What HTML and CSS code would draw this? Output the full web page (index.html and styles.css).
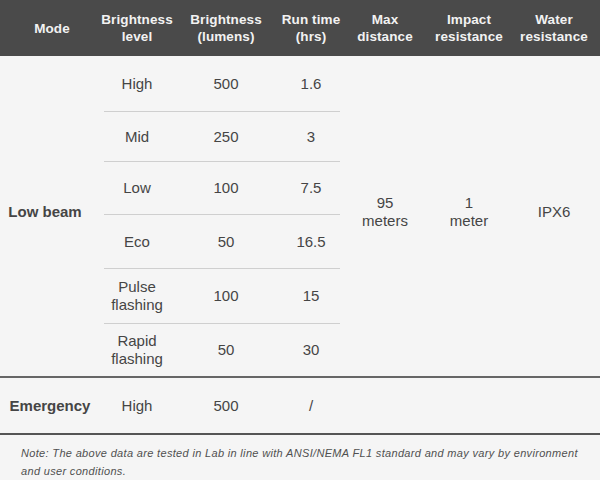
FILE: index.html
```html
<!DOCTYPE html>
<html>
<head>
<meta charset="utf-8">
<link rel="stylesheet" href="styles.css">
</head>
<body>
<div class="spec">
  <div class="grid head">
    <div class="hc">Mode</div>
    <div class="hc">Brightness<br>level</div>
    <div class="hc">Brightness<br>(lumens)</div>
    <div class="hc">Run time<br>(hrs)</div>
    <div class="hc">Max<br>distance</div>
    <div class="hc">Impact<br>resistance</div>
    <div class="hc">Water<br>resistance</div>
  </div>
  <div class="grid body">
    <div class="c span mode lowbeam">Low beam</div>
    <div class="c r1 l">High</div><div class="c r1 l">500</div><div class="c r1 l">1.6</div>
    <div class="c span rc5">95<br>meters</div>
    <div class="c span rc6">1<br>meter</div>
    <div class="c span rc7">IPX6</div>
    <div class="c l">Mid</div><div class="c l">250</div><div class="c l">3</div>
    <div class="c l">Low</div><div class="c l">100</div><div class="c l">7.5</div>
    <div class="c l">Eco</div><div class="c l">50</div><div class="c l">16.5</div>
    <div class="c l">Pulse<br>flashing</div><div class="c l">100</div><div class="c l">15</div>
    <div class="c">Rapid<br>flashing</div><div class="c">50</div><div class="c">30</div>
  </div>
  <div class="grid emerg">
    <div class="c mode emode">Emergency</div>
    <div class="c">High</div>
    <div class="c">500</div>
    <div class="c">/</div>
    <div class="c"></div>
    <div class="c"></div>
    <div class="c"></div>
  </div>
  <p class="note">Note: The above data are tested in Lab in line with ANSI/NEMA FL1 standard and may vary by environment and user conditions.</p>
</div>
</body>
</html>
```

FILE: styles.css
```css
* { box-sizing: border-box; }
html, body { margin: 0; padding: 0; }
body {
  width: 600px;
  height: 480px;
  background: #f5f5f5;
  font-family: "Liberation Sans", Arial, sans-serif;
  color: #454545;
  overflow: hidden;
}
.grid {
  display: grid;
  grid-template-columns: 104px 66px 112px 58px 90px 78px 92px;
}
.head {
  background: #4a4a4a;
  height: 56px;
}
.hc {
  display: flex;
  align-items: center;
  justify-content: center;
  text-align: center;
  white-space: nowrap;
  color: #f2f2f2;
  font-weight: bold;
  font-size: 13.5px;
  line-height: 17px;
  letter-spacing: 0.1px;
}
.body {
  grid-template-rows: 56px 50px 53px 54px 55px 52px;
}
.c {
  display: flex;
  align-items: center;
  justify-content: center;
  text-align: center;
  font-size: 15px;
  line-height: 18px;
}
.l { border-bottom: 1.5px solid #cfcfcf; }
.span { grid-row: 1 / span 6; padding-bottom: 8px; }
.mode { font-weight: bold; font-size: 15px; }
.lowbeam { padding-right: 14px; }
.emode { padding-right: 4px; }
.rc5 { grid-column: 5; }
.rc6 { grid-column: 6; }
.rc7 { grid-column: 7; }
.emerg {
  height: 59px;
  border-top: 2px solid #666;
  border-bottom: 2px solid #555;
}
.note {
  margin: 0;
  padding: 9px 10px 0 21px;
  font-size: 11px;
  line-height: 18px;
  font-style: italic;
  letter-spacing: 0.33px;
  color: #505050;
}
```
